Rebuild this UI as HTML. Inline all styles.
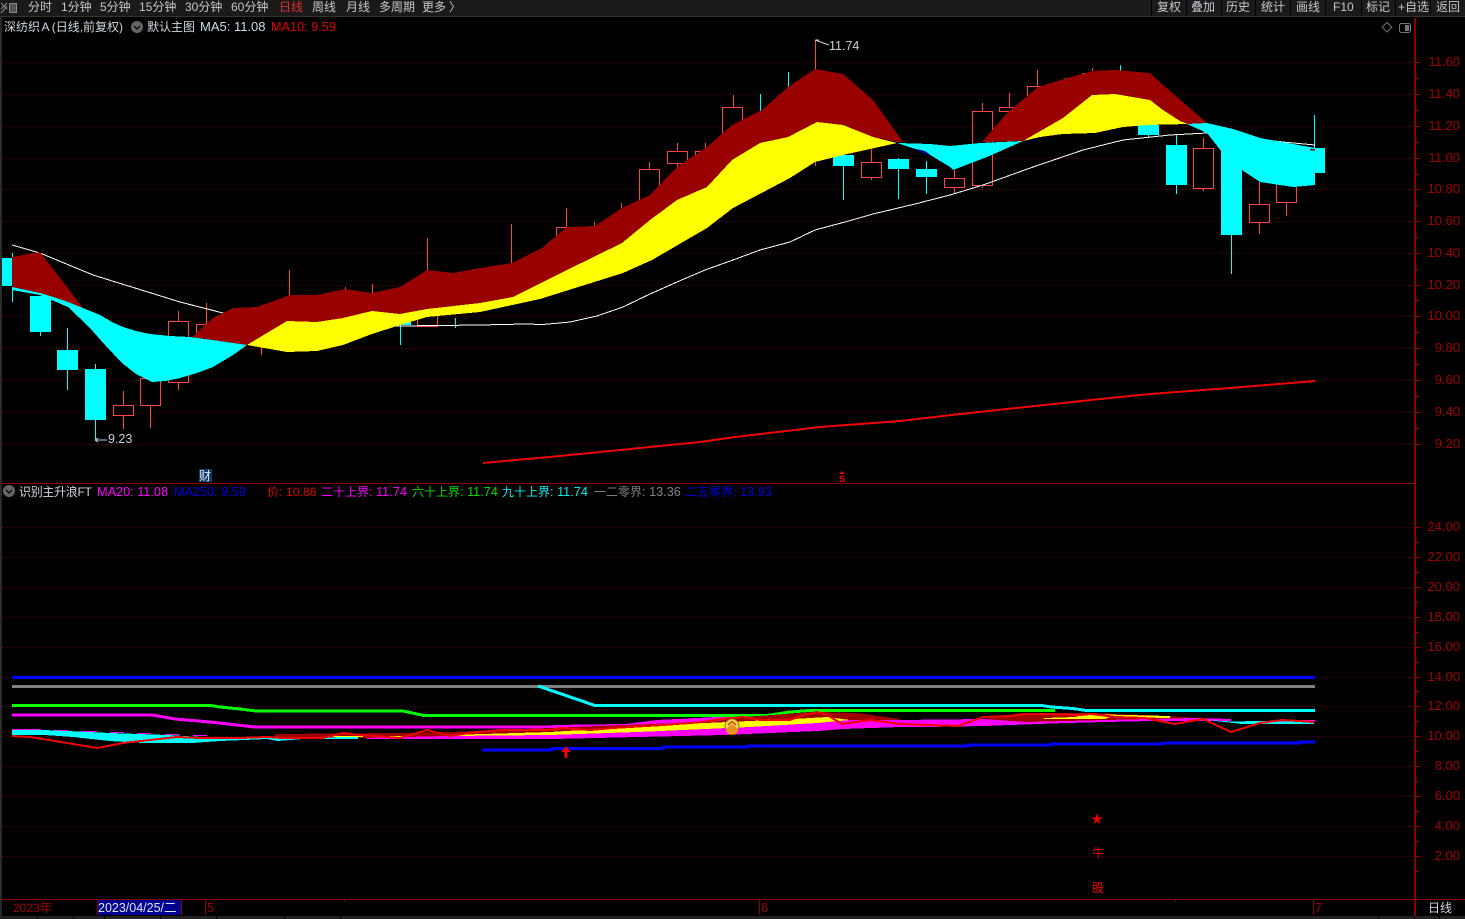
<!DOCTYPE html>
<html><head><meta charset="utf-8"><title>深纺织A</title>
<style>
html,body{margin:0;padding:0;background:#000;width:1465px;height:919px;overflow:hidden}
svg{display:block}
text{font-family:"Liberation Sans","Noto Sans CJK SC",sans-serif;white-space:pre}
.n text{font-size:12px;fill:#c4c8cc}
.c polygon,.c rect,.c path,.c polyline{shape-rendering:crispEdges}
.a text{font-size:13px;fill:#a00000;text-anchor:end}
.l{font-size:12.7px}
</style></head><body>
<svg width="1465" height="919" viewBox="0 0 1465 919" xmlns="http://www.w3.org/2000/svg">
<rect width="1465" height="919" fill="#000"/>
<!-- top bar -->
<rect x="0" y="0" width="1465" height="16" fill="#1a1a1a"/>
<rect x="0" y="16" width="1465" height="1" fill="#333"/>
<rect x="0" y="17" width="2" height="902" fill="#2a2a2a"/>
<g stroke="#8a8a8a" fill="none" stroke-width="1"><path d="M1 3L7 9M7 3L1 9M1 13L7 6"/><rect x="9.5" y="3.5" width="7" height="9" fill="#555"/></g>
<g fill="#000" shape-rendering="crispEdges"><rect x="1151" y="0" width="1" height="16"/><rect x="1186" y="0" width="1" height="16"/><rect x="1221" y="0" width="1" height="16"/><rect x="1255" y="0" width="1" height="16"/><rect x="1290" y="0" width="1" height="16"/><rect x="1325" y="0" width="1" height="16"/><rect x="1361" y="0" width="1" height="16"/><rect x="1395" y="0" width="1" height="16"/><rect x="1430" y="0" width="1" height="16"/></g>
<g class="n">
<text x="28" y="11">分时</text><text x="61" y="11">1分钟</text><text x="100" y="11">5分钟</text><text x="139" y="11">15分钟</text><text x="185" y="11">30分钟</text><text x="231" y="11">60分钟</text><text x="279" y="11" style="fill:#e03030">日线</text><text x="312" y="11">周线</text><text x="346" y="11">月线</text><text x="379" y="11">多周期</text><text x="422" y="11">更多</text><text x="449" y="11">〉</text>
<text x="1157" y="11">复权</text><text x="1191" y="11">叠加</text><text x="1226" y="11">历史</text><text x="1261" y="11">统计</text><text x="1296" y="11">画线</text><text x="1333" y="11">F10</text><text x="1366" y="11">标记</text><text x="1398" y="11">+自选</text><text x="1436" y="11">返回</text>
</g>
<!-- legend top -->
<text x="4" y="31" font-size="12" fill="#d0d8e0">深纺织<tspan dx="1.5">A</tspan><tspan dx="-0.5"> (日线,前复权)</tspan></text>
<circle cx="137" cy="27" r="6" fill="#666"/><path d="M134 26l3 3 3-3" stroke="#111" stroke-width="1.5" fill="none"/>
<text x="147" y="31" font-size="12" fill="#d0d8e0">默认主图</text>
<text x="200" y="31" font-size="13" fill="#cfdcec">MA5: 11.08</text>
<text x="271" y="31" class="l" fill="#e00000">MA10: 9.59</text>
<path d="M1387 22.5l4.8 4.8-4.8 4.8-4.8-4.8z" fill="none" stroke="#777"/>
<rect x="1399.5" y="23.5" width="11" height="9" rx="2" fill="none" stroke="#777"/><rect x="1405" y="25" width="4" height="6" fill="#777"/>
<!-- grids -->
<g stroke="#800000" stroke-width="1" stroke-dasharray="1 3" shape-rendering="crispEdges">
<path d="M2 62.5H1415M2 94.5H1415M2 126.5H1415M2 158.5H1415M2 189.5H1415M2 221.5H1415M2 253.5H1415M2 285.5H1415M2 316.5H1415M2 348.5H1415M2 380.5H1415M2 412.5H1415M2 444.5H1415"/>
<path d="M2 527.5H1415M2 557.5H1415M2 587.5H1415M2 617.5H1415M2 647.5H1415M2 677.5H1415M2 706.5H1415M2 736.5H1415M2 766.5H1415M2 796.5H1415M2 826.5H1415M2 856.5H1415"/>
</g>
<!-- candles -->
<g class="c" stroke-width="1" fill="none">
<g stroke="#00ffff" fill="#00ffff">
<path d="M12.5 253V302M40.5 332V336M67.5 328V390M95.5 364V440M400.5 318V345M455.5 318V328M760.5 94V130M788.5 72V100M843.5 155V200M898.5 158V199M926.5 161V194M1065.5 78V90M1120.5 65V75M1148.5 125V137M1176.5 135V194M1231.5 150V274M1314.5 115V150"/>
<rect x="2.5" y="258.5" width="20" height="27"/><rect x="30.5" y="296.5" width="20" height="35"/><rect x="57.5" y="350.5" width="20" height="19"/><rect x="85.5" y="369.5" width="20" height="50"/><rect x="390.5" y="318.5" width="20" height="6"/><rect x="833.5" y="155.5" width="20" height="10"/><rect x="888.5" y="159.5" width="20" height="9"/><rect x="916.5" y="169.5" width="20" height="7"/><rect x="1138.5" y="125.5" width="20" height="9"/><rect x="1166.5" y="145.5" width="20" height="39"/><rect x="1221.5" y="150.5" width="20" height="84"/><rect x="1304.5" y="148.5" width="20" height="24"/>
</g>
<g stroke="#ff4444">
<path d="M123.5 391V405M123.5 416V429M150.5 405V428M178.5 311V321M178.5 383V390M206.5 303V324M261.5 305V355M289.5 270V300M345.5 287V295M372.5 284V295M427.5 238V275M511.5 224V270M566.5 208V230M594.5 222V230M621.5 203V212M649.5 162V169M677.5 143V151M677.5 163V168M705.5 143V151M733.5 95V107M815.5 40V166M871.5 148V162M871.5 178V180M954.5 170V178M954.5 187V194M982.5 103V111M982.5 186V188M1009.5 93V107M1009.5 111V118M1037.5 70V86M1092.5 68V73M1203.5 138V148M1203.5 189V191M1259.5 182V204M1259.5 222V234M1286.5 203V216"/>
<g fill="#000">
<rect x="113.5" y="405.5" width="20" height="10"/><rect x="140.5" y="378.5" width="20" height="27"/><rect x="168.5" y="321.5" width="20" height="61"/><rect x="196.5" y="324.5" width="20" height="20"/><rect x="417.5" y="300.5" width="20" height="26"/><rect x="556.5" y="227.5" width="20" height="30"/><rect x="639.5" y="169.5" width="20" height="31"/><rect x="667.5" y="151.5" width="20" height="12"/><rect x="695.5" y="151.5" width="20" height="30"/><rect x="722.5" y="107.5" width="20" height="26"/><rect x="861.5" y="162.5" width="20" height="15"/><rect x="944.5" y="178.5" width="20" height="9"/><rect x="972.5" y="111.5" width="20" height="74"/><rect x="999.5" y="107.5" width="20" height="4"/><rect x="1027.5" y="86.5" width="20" height="30"/><rect x="1082.5" y="73.5" width="20" height="20"/><rect x="1193.5" y="148.5" width="20" height="40"/><rect x="1249.5" y="204.5" width="20" height="18"/><rect x="1276.5" y="175.5" width="20" height="27"/>
</g></g>
</g>
<!-- white MA line -->
<polyline shape-rendering="crispEdges" points="12,245 40,253 93,275 180,302 223,313 260,318 310,323 397,326 480,325 525,324 543,324.5 570,322 597,316 623,307 650,294 677,282 705,270 733,260 760,250 790,242 815,230 845,222 873,214 915,204 950,195 983,185 1033,167 1083,150 1123,140 1170,135 1207,133 1283,142 1315,145" fill="none" stroke="#fff" stroke-width="1"/>
<!-- ribbons -->
<g class="c">
<polygon fill="#990000" points="12,257 40,252 83,308 68,302 50,296 40,293 12,287"/>
<polygon fill="#00ffff" points="12,287 40,293 50,296 68,302 83,308 100,315 112,322 123,327 136,331 150,334 170,336 190,337 220,341 247,345 233,355 213,367 197,373 180,378 165,381 152,382 136,374 122,363 105,345 90,328 68,307 40,295 12,290"/>
<polygon fill="#990000" points="192,337 213,318 233,308 257,307 290,295 317,295 345,289 372,293 400,287 427,270 453,273 480,268 512,263 542,248 567,227 595,226 622,208 650,195 677,167 707,147 732,125 762,110 788,87 815,69 843,74 873,100 903,142 897,142 873,137 843,125 817,122 788,137 760,143 732,160 707,187 677,200 650,220 622,243 567,270 513,297 480,303 427,309 400,314 372,311 343,318 317,322 287,321 247,345"/>
<polygon fill="#ffff00" points="247,345 287,321 317,322 343,318 372,311 400,314 427,309 480,303 513,297 567,270 622,243 650,220 677,200 707,187 732,160 760,143 788,137 817,122 843,125 873,137 897,143 843,155 815,162 790,178 733,208 707,228 652,260 623,273 540,299 480,312 427,317 400,325 372,334 343,345 317,351 287,352"/>
<polygon fill="#00ffff" points="897,143 930,144 950,146 980,143 1023,141 987,157 953,170 950,167 927,153 912,148"/>
<polygon fill="#000080" points="912,148 925,151 932,156 922,153"/>
<polygon fill="#990000" points="982,142 1007,113 1038,87 1067,78 1093,71 1115,70 1150,73 1163,85 1207,123 1188,124 1180,121 1163,110 1150,100 1115,94 1092,95 1063,118 1023,141"/>
<polygon fill="#ffff00" points="1023,141 1063,118 1092,95 1115,94 1150,100 1163,110 1180,121 1188,124 1147,125 1123,127 1095,133 1063,134 1040,137"/>
<polygon fill="#00ffff" points="1187,124 1207,123 1233,129 1260,138 1293,144 1315,148 1315,185 1293,187 1260,182 1242,170 1222,152 1207,133"/>
<rect x="1310" y="149" width="5" height="1.5" fill="#990000"/>
</g>
<!-- red MA10 line -->
<polyline points="483,463 560,456 700,442 735,437 820,427 900,421 960,414 1100,399 1150,394 1230,388 1315,381" fill="none" stroke="#f00000" stroke-width="2" shape-rendering="crispEdges"/>
<!-- annotations -->
<path d="M815 40L829 45M816 40h3M95 440h12M95 440l3-2M95 440l3 2" stroke="#c8d0d8" stroke-width="1" fill="none"/>
<text x="829" y="50" font-size="12.5" fill="#c8d0d8">11.74</text>
<text x="108" y="443" font-size="12.5" fill="#c8d0d8">9.23</text>
<rect x="199" y="469" width="13" height="13" fill="#103a68"/>
<text x="199" y="480" font-size="12" fill="#e0e8f0">财</text>
<path d="M842 471l-3 3h6z" fill="#f00000"/>
<text x="842" y="482" font-size="9.5" font-weight="bold" fill="#f00000" text-anchor="middle">S</text>
<!-- divider -->
<rect x="2" y="483" width="1413" height="1" fill="#8b0000"/>
<!-- legend lower -->
<circle cx="9" cy="491" r="6" fill="#666"/><path d="M6 490l3 3 3-3" stroke="#111" stroke-width="1.5" fill="none"/>
<text x="19" y="496" font-size="12" letter-spacing="-0.3" fill="#d0d8e0">识别主升浪FT</text>
<text x="97" y="496" class="l" fill="#ff00ff">MA20: 11.08</text>
<text x="174" y="496" class="l" fill="#0000e0">MA250: 9.59</text>
<text x="267" y="496" font-size="12.3" fill="#e00000"><tspan font-size="12">价</tspan>: 10.86</text>
<text x="321" y="496" class="l" fill="#ff00ff"><tspan font-size="12">二十上界</tspan>: 11.74</text>
<text x="412" y="496" class="l" fill="#00e000"><tspan font-size="12">六十上界</tspan>: 11.74</text>
<text x="502" y="496" class="l" fill="#00f0f0"><tspan font-size="12">九十上界</tspan>: 11.74</text>
<text x="594" y="496" class="l" fill="#808080"><tspan font-size="12">一二零界</tspan>: 13.36</text>
<text x="685" y="496" class="l" fill="#0000e0"><tspan font-size="12">二五零界</tspan>: 13.93</text>
<!-- lower chart -->
<g class="c" fill="none">
<rect x="12" y="676" width="1303" height="3" fill="#0000ff"/>
<rect x="12" y="685" width="1303" height="3" fill="#808080"/>
<polyline stroke="#00ff00" stroke-width="3" points="12,705.5 211,705.5 220,707 240,709 256,711 403,711 424,715.5 767,715.5 790,712 810,710.5 1055,710.5"/>
<polyline stroke="#00ffff" stroke-width="3" points="538,686 595,705.5 1042,705.5 1051,707 1073,708.5 1086,710.5 1315,710.5"/>
<polyline stroke="#ff00ff" stroke-width="3" points="12,715 152,715 175,719 210,722 255,727 553,727"/>
<polygon fill="#ff00ff" points="367,736 450,734 553,732 553,725 625,724 657,720 717,717 800,716 843,717 900,720 983,719 1195,718 1231,719 1231,721 1152,721 1105,722 1066,723 983,726 927,727 900,727 843,729 817,731 723,735 637,737 553,739 450,739 367,739"/>
<polygon fill="#a00000" points="275,734 400,733 450,732 497,730 550,728 623,725 710,722 743,717 800,713 820,712 857,713 900,719 900,720 823,720 767,722 630,728 523,733 450,736 360,738 275,738"/>
<polygon fill="#a00000" points="983,719 1022,713 1091,713 1170,716 1195,718 1105,720 1066,721 1027,722"/>
<polygon fill="#ffff00" points="450,735 550,732 617,728 683,724 750,721 793,719 827,717 850,720 817,723 750,727 683,730 637,732 550,735 450,736"/>
<polygon fill="#ffff00" points="1044,718 1075,717 1085,714.5 1105,714.5 1170,716 1170,718 1110,717 1105,719 1044,719"/>
<rect x="333" y="736" width="30" height="1" fill="#ffff00"/><rect x="382" y="736" width="23" height="1" fill="#ffff00"/>
<path d="M12 729h29v1H12zM53 730h15v1H53zM82 731h15v1H82zM110 732h14v1h-14zM137 733h14v1h-14zM165 734h14v1h-14zM193 735h14v1h-14z" fill="#ff00ff"/>
<polygon fill="#00ffff" points="12,730 43,730 67,731 110,733 167,735 220,738 270,738 358,737 358,739 303,739 277,741 267,739 220,741 192,743 143,743 110,741 73,737 45,735 12,735"/>
<polygon fill="#00ffff" points="1206,720 1231,721.5 1314,720 1314,724 1242,724"/>
<path d="M1275 720h40v1.5h-40z" fill="#ff00ff"/>
<path stroke="#0000ff" stroke-width="3" d="M482 750H552V748.7H663V747H747V746H968V745H1051V744H1163V743H1300V742H1315"/>
<polyline stroke="#f00000" stroke-width="2" points="12,736 30,737 67,743 97,748 123,743 150,740 177,737 200,738 240,738 267,737 283,738 323,738 343,733 360,735 400,738 427,730 450,736 470,733 500,730 550,730 560,728 590,730 613,728 663,725 703,722 720,719 743,717 760,720 790,720 803,715 817,712 827,715 842,724 870,720 900,724 958,726 983,717 1008,716 1026,714 1044,714 1080,715 1091,714 1116,717 1145,718 1174,724 1203,719 1231,732 1260,723 1282,720 1314,722"/>
</g>
<!-- arrow & bubble -->
<path d="M566 746l5 6h-3.500v6h-3v-6h-3.500z" fill="#f00000"/>
<circle cx="732" cy="726" r="7" fill="#f2d66a" stroke="#a06a10"/>
<path d="M726 729l6-5 6 5v2.500a7 7 0 0 1-12 0z" fill="#f09020"/>
<path d="M728 725l4-3.500 4 3.500" stroke="#c85000" fill="none" stroke-width="1.500"/>
<text x="1097" y="823" font-size="12" fill="#f00000" text-anchor="middle">★</text>
<text x="1098" y="857" font-size="12" fill="#f00000" text-anchor="middle">牛</text>
<text x="1098" y="892" font-size="12" fill="#f00000" text-anchor="middle">股</text>
<!-- right axis -->
<rect x="1414" y="18" width="2" height="901" fill="#8b0000"/>
<path shape-rendering="crispEdges" stroke="#8b0000" d="M1416 62.500h5M1416 94.500h5M1416 126.500h5M1416 158.500h5M1416 189.500h5M1416 221.500h5M1416 253.500h5M1416 285.500h5M1416 316.500h5M1416 348.500h5M1416 380.500h5M1416 412.500h5M1416 444.500h5M1416 78.500h3M1416 110.500h3M1416 142.500h3M1416 174.500h3M1416 205.500h3M1416 237.500h3M1416 269.500h3M1416 300.500h3M1416 332.500h3M1416 364.500h3M1416 396.500h3M1416 428.500h3M1416 527.500h5M1416 557.500h5M1416 587.500h5M1416 617.500h5M1416 647.500h5M1416 677.500h5M1416 706.500h5M1416 736.500h5M1416 766.500h5M1416 796.500h5M1416 826.500h5M1416 856.500h5M1416 542.500h3M1416 572.500h3M1416 602.500h3M1416 632.500h3M1416 662.500h3M1416 691.500h3M1416 721.500h3M1416 751.500h3M1416 781.500h3M1416 811.500h3M1416 841.500h3M1416 871.500h3"/>
<g class="a">
<text x="1460" y="66">11.60</text><text x="1460" y="98">11.40</text><text x="1460" y="130">11.20</text><text x="1460" y="162">11.00</text><text x="1460" y="193">10.80</text><text x="1460" y="225">10.60</text><text x="1460" y="257">10.40</text><text x="1460" y="289">10.20</text><text x="1460" y="320">10.00</text><text x="1460" y="352">9.80</text><text x="1460" y="384">9.60</text><text x="1460" y="416">9.40</text><text x="1460" y="448">9.20</text>
<text x="1460" y="531">24.00</text><text x="1460" y="561">22.00</text><text x="1460" y="591">20.00</text><text x="1460" y="621">18.00</text><text x="1460" y="651">16.00</text><text x="1460" y="681">14.00</text><text x="1460" y="710">12.00</text><text x="1460" y="740">10.00</text><text x="1460" y="770">8.00</text><text x="1460" y="800">6.00</text><text x="1460" y="830">4.00</text><text x="1460" y="860">2.00</text>
</g>
<!-- bottom axis -->
<rect x="2" y="899" width="1463" height="1" fill="#8b0000"/>
<rect x="0" y="916" width="1465" height="3" fill="#222"/>
<g fill="#000" shape-rendering="crispEdges"><rect x="37" y="916" width="1" height="3"/><rect x="73" y="916" width="1" height="3"/><rect x="104" y="916" width="1" height="3"/><rect x="160" y="916" width="1" height="3"/><rect x="216" y="916" width="1" height="3"/><rect x="284" y="916" width="1" height="3"/><rect x="340" y="916" width="1" height="3"/><rect x="1378" y="916" width="1" height="3"/><rect x="1414" y="916" width="1" height="3"/><rect x="1439" y="916" width="1" height="3"/></g>
<text x="13" y="912" font-size="12" fill="#a00000">2023年</text>
<rect x="97" y="900" width="85" height="15" fill="#000090"/>
<rect x="97" y="899" width="1" height="16" fill="#8b0000"/><rect x="181" y="899" width="1" height="16" fill="#8b0000"/>
<text x="98" y="912" font-size="12.500" fill="#e0e4f0">2023/04/25/二</text>
<rect x="205" y="899" width="1" height="16" fill="#8b0000"/>
<text x="207" y="912" font-size="12.500" fill="#a00000">5</text>
<rect x="759" y="899" width="1" height="16" fill="#8b0000"/>
<text x="761" y="912" font-size="12.500" fill="#a00000">6</text>
<rect x="1313" y="899" width="1" height="16" fill="#8b0000"/>
<text x="1315" y="912" font-size="12.500" fill="#a00000">7</text>
<rect x="344" y="899" width="1" height="3" fill="#8b0000"/><rect x="1175" y="899" width="1" height="3" fill="#8b0000"/>
<text x="1428" y="912" font-size="12" fill="#d0d8e0">日线</text>
</svg>
</body></html>
